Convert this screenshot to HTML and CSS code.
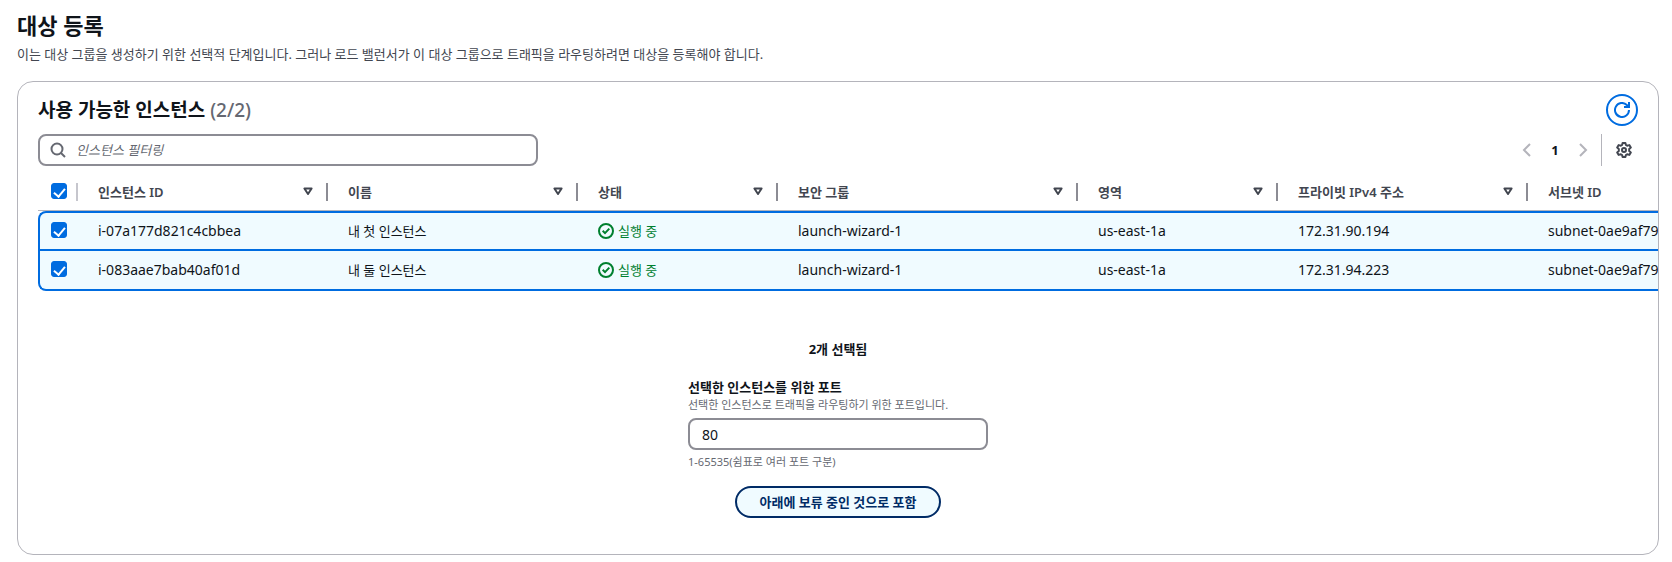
FILE: index.html
```html
<!DOCTYPE html>
<html lang="ko">
<head>
  <meta charset="UTF-8" />
  <meta name="viewport" content="width=device-width, initial-scale=1.0"/>
  <title>대상 등록</title>
  <link rel="stylesheet" href="styles.css">
</head>
<body>

  <!-- Shared icons -->
  <svg class="icon-defs" width="0" height="0" aria-hidden="true">
    <symbol id="sort" viewBox="0 0 10 9">
      <path d="M1.4 1.5h7.2L5 7z" fill="none" stroke="currentColor" stroke-width="2" stroke-linejoin="round"/>
    </symbol>
    <symbol id="ok" viewBox="0 0 16 16">
      <circle cx="8" cy="8" r="7" fill="none" stroke="currentColor" stroke-width="2"/>
      <path d="M4.700 7.800l2.300 2.300L11.300 5.600" fill="none" stroke="currentColor" stroke-width="2"/>
    </symbol>
  </svg>

  <header class="page-header">
    <h1>대상 등록</h1>
    <p>이는 대상 그룹을 생성하기 위한 선택적 단계입니다. 그러나 로드 밸런서가 이 대상 그룹으로 트래픽을 라우팅하려면 대상을 등록해야 합니다.</p>
  </header>

  <main class="card">
    <!-- Title row -->
    <div class="card-header">
      <h2>사용 가능한 인스턴스 <span class="counter">(2/2)</span></h2>
      <button type="button" class="refresh-btn" aria-label="새로 고침">
        <svg width="16" height="16" viewBox="0 0 16 16" fill="none" stroke="currentColor" stroke-width="2">
          <path d="M15 8a7 7 0 1 1-2.200-5.100L15 5"/>
          <path d="M15 0v5h-5"/>
        </svg>
      </button>
    </div>

    <!-- Filter and pagination -->
    <div class="toolbar">
      <div class="search">
        <svg width="16" height="16" viewBox="0 0 16 16" fill="none" stroke="currentColor" stroke-width="2" aria-hidden="true">
          <circle cx="7" cy="7" r="5.5"/>
          <path d="M11 11l4 4"/>
        </svg>
        <input type="search" placeholder="인스턴스 필터링" aria-label="인스턴스 필터링">
      </div>
      <div class="tools">
        <nav class="pagination" aria-label="페이지">
          <button type="button" class="page-arrow" aria-label="이전 페이지" disabled>
            <svg width="16" height="16" viewBox="0 0 16 16" fill="none" stroke="currentColor" stroke-width="2"><path d="M11 2L5 8l6 6"/></svg>
          </button>
          <button type="button" class="page-number" aria-current="page">1</button>
          <button type="button" class="page-arrow" aria-label="다음 페이지" disabled>
            <svg width="16" height="16" viewBox="0 0 16 16" fill="none" stroke="currentColor" stroke-width="2"><path d="M5 2l6 6-6 6"/></svg>
          </button>
        </nav>
        <button type="button" class="settings-btn" aria-label="기본 설정">
          <svg width="16" height="16" viewBox="0 0 16 16" fill="none" stroke="currentColor" stroke-width="2" stroke-linejoin="round">
            <path d="M6.600 1h2.800l.5 2 1.200.7 2.200-.6 1.500 2.500L13.200 7v2l1.600 1.400-1.500 2.500-2.200-.6-1.200.7-.5 2H6.600l-.5-2-1.200-.7-2.200.6-1.500-2.500L2.800 9V7L1.200 5.600l1.500-2.500 2.200.6L6.100 3z"/>
            <circle cx="8" cy="8" r="2"/>
          </svg>
        </button>
      </div>
    </div>

    <!-- Instances -->
    <div class="table-wrap">
      <table>
        <colgroup>
          <col class="col-select"><col class="col-m"><col class="col-m"><col class="col-s">
          <col class="col-l"><col class="col-s"><col class="col-m"><col class="col-m">
        </colgroup>
        <thead>
          <tr>
            <th scope="col" class="select"><input type="checkbox" aria-label="모두 선택" checked></th>
            <th scope="col"><div class="th">인스턴스 ID<svg class="sort"><use href="#sort"/></svg></div></th>
            <th scope="col"><div class="th">이름<svg class="sort"><use href="#sort"/></svg></div></th>
            <th scope="col"><div class="th">상태<svg class="sort"><use href="#sort"/></svg></div></th>
            <th scope="col"><div class="th">보안 그룹<svg class="sort"><use href="#sort"/></svg></div></th>
            <th scope="col"><div class="th">영역<svg class="sort"><use href="#sort"/></svg></div></th>
            <th scope="col"><div class="th">프라이빗 IPv4 주소<svg class="sort"><use href="#sort"/></svg></div></th>
            <th scope="col"><div class="th">서브넷 ID<svg class="sort"><use href="#sort"/></svg></div></th>
          </tr>
        </thead>
        <tbody>
          <tr>
            <td class="select"><input type="checkbox" aria-label="i-07a177d821c4cbbea" checked></td>
            <td class="value">i-07a177d821c4cbbea</td>
            <td>내 첫 인스턴스</td>
            <td><span class="status"><svg width="16" height="16"><use href="#ok"/></svg>실행 중</span></td>
            <td class="value">launch-wizard-1</td>
            <td class="value">us-east-1a</td>
            <td class="value">172.31.90.194</td>
            <td class="value">subnet-0ae9af79a</td>
          </tr>
          <tr>
            <td class="select"><input type="checkbox" aria-label="i-083aae7bab40af01d" checked></td>
            <td class="value">i-083aae7bab40af01d</td>
            <td>내 둘 인스턴스</td>
            <td><span class="status"><svg width="16" height="16"><use href="#ok"/></svg>실행 중</span></td>
            <td class="value">launch-wizard-1</td>
            <td class="value">us-east-1a</td>
            <td class="value">172.31.94.223</td>
            <td class="value">subnet-0ae9af79a</td>
          </tr>
        </tbody>
      </table>
    </div>

    <!-- Port for the selected instances -->
    <form class="port-form">
      <p class="selected-count">2개 선택됨</p>
      <div class="field">
        <label for="port">선택한 인스턴스를 위한 포트</label>
        <p class="hint" id="portDesc">선택한 인스턴스로 트래픽을 라우팅하기 위한 포트입니다.</p>
        <input type="text" id="port" value="80" aria-describedby="portDesc portHint">
        <p class="hint" id="portHint">1-65535(쉼표로 여러 포트 구분)</p>
      </div>
      <button type="button" class="include-btn">아래에 보류 중인 것으로 포함</button>
    </form>
  </main>

</body>
</html>
```
FILE: styles.css
```css
* {
  margin: 0;
  padding: 0;
  box-sizing: border-box;
}

body {
  padding: 10px 13px 7px 17px;
  background: #fff;
  color: #0f141a;
  font-family: "Noto Sans", "Noto Sans CJK KR", sans-serif;
  font-size: 13px;
  line-height: 20px;
}

button,
input {
  font: inherit;
  color: inherit;
}

button {
  border: none;
  background: none;
  cursor: pointer;
}

svg {
  display: block;
  flex: none;
}

.icon-defs {
  position: absolute;
}

/* Page header */
.page-header h1 {
  font-size: 22px;
  font-weight: 700;
  line-height: 30px;
}

.page-header p {
  margin-top: 4px;
  color: #424650;
}

/* Card */
.card {
  margin-top: 17px;
  padding: 12px 0 36px 20px;
  border: 1px solid #b4b4bb;
  border-radius: 16px;
  overflow: hidden;
}

.card-header,
.toolbar {
  display: flex;
  justify-content: space-between;
  align-items: center;
  padding-right: 20px;
}

.card-header h2 {
  font-size: 19px;
  font-weight: 700;
  line-height: 24px;
}

.counter {
  color: #656871;
  font-weight: 500;
}

.refresh-btn {
  display: flex;
  align-items: center;
  justify-content: center;
  width: 32px;
  height: 32px;
  border: 2px solid #006ce0;
  border-radius: 50%;
  color: #006ce0;
}

/* Toolbar */
.toolbar {
  margin-top: 8px;
}

.search {
  display: flex;
  align-items: center;
  gap: 10px;
  width: 500px;
  height: 32px;
  padding: 0 10px;
  border: 2px solid #8c8c94;
  border-radius: 8px;
  color: #656871;
}

.search input {
  flex: 1;
  border: none;
  outline: none;
  background: none;
}

.search input::placeholder {
  color: #656871;
  font-style: italic;
  opacity: 1;
}

.tools,
.pagination {
  display: flex;
  align-items: center;
}

.page-arrow {
  padding: 8px 0;
  color: #b4b4bb;
}

.page-number {
  width: 40px;
  font-weight: 700;
}

.settings-btn {
  margin-left: 10px;
  padding: 8px 6px 8px 14px;
  border-left: 1px solid #b4b4bb;
  color: #424650;
}

/* Table */
.table-wrap {
  margin-top: 7px;
  overflow-x: auto;
  scrollbar-width: none;
}

table {
  width: 1740px;
  table-layout: fixed;
  border-collapse: separate;
  border-spacing: 0;
}

.col-select { width: 40px; }
.col-s { width: 200px; }
.col-m { width: 250px; }
.col-l { width: 300px; }

th,
td {
  padding: 0 0 0 20px;
  text-align: left;
  white-space: nowrap;
}

th {
  height: 38px;
  border-bottom: 1px solid #b4b4bb;
  color: #424650;
  font-weight: 600;
}

.th {
  display: flex;
  align-items: center;
  justify-content: space-between;
  height: 18px;
  padding-right: 13px;
  border-right: 2px solid #8c8c94;
}

.sort {
  width: 10px;
  height: 9px;
}

td {
  height: 40px;
  border-bottom: 2px solid #006ce0;
  background: #f0fbff;
}

tbody tr:first-child td {
  border-top: 2px solid #006ce0;
}

.value {
  font-size: 14px;
}

.select {
  padding: 0 0 2px 13px;
}

th.select {
  background: linear-gradient(#c6c6cd, #c6c6cd) right center / 2px 18px no-repeat;
}

td.select {
  padding-left: 11px;
  border-left: 2px solid #006ce0;
}

tbody tr:first-child .select {
  border-top-left-radius: 8px;
}

tbody tr:last-child .select {
  border-bottom-left-radius: 8px;
}

input[type="checkbox"] {
  display: block;
  appearance: none;
  width: 16px;
  height: 16px;
  border: 1px solid #8c8c94;
  border-radius: 3px;
}

input[type="checkbox"]:checked {
  border-color: #006ce0;
  background: #006ce0;
}

/* Tick mark */
input[type="checkbox"]:checked::before {
  content: "";
  display: block;
  width: 5px;
  height: 9px;
  margin: 2px auto 0;
  border: solid #fff;
  border-width: 0 2px 2px 0;
  transform: rotate(40deg);
}

.status {
  display: flex;
  align-items: center;
  gap: 4px;
  color: #00802f;
}

/* Port form */
.port-form {
  display: flex;
  flex-direction: column;
  align-items: center;
  margin-top: 48px;
  padding-right: 20px;
}

.selected-count {
  font-weight: 700;
}

.field {
  width: 300px;
  margin: 18px 0 16px;
}

.field label {
  display: block;
  font-weight: 700;
}

.hint {
  color: #656871;
  font-size: 11px;
  line-height: 16px;
  white-space: nowrap;
}

.field input {
  display: block;
  width: 100%;
  height: 32px;
  margin: 5px 0 4px;
  padding: 0 12px;
  border: 2px solid #8c8c94;
  border-radius: 8px;
  color: #0f141a;
  font-size: 14px;
}

.include-btn {
  height: 32px;
  padding: 0 22px;
  border: 2px solid #002b66;
  border-radius: 16px;
  background: #f0fbff;
  color: #002b66;
  font-weight: 700;
}
```
